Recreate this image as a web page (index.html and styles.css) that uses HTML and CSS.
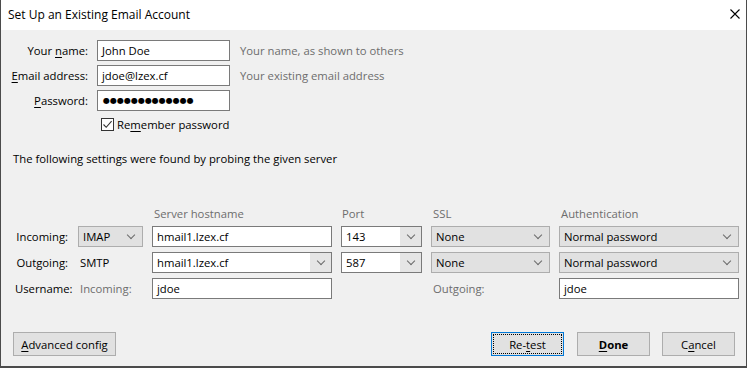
FILE: index.html
```html
<!DOCTYPE html>
<html>
<head>
<meta charset="utf-8">
<link rel="stylesheet" href="styles.css">
</head>
<body>
<div class="window">
  <div class="titlebar">
    <span class="title">Set Up an Existing Email Account</span>
    <svg class="close" width="10" height="10" viewBox="0 0 10 10"><path d="M0.5 0.5 L9.5 9.5 M9.5 0.5 L0.5 9.5" stroke="#000" stroke-width="1.1" fill="none"/></svg>
  </div>

  <div class="identity">
    <label class="lbl">Your <u>n</u>ame:</label>
    <div class="field">John Doe</div>
    <span class="hint">Your name, as shown to others</span>

    <label class="lbl"><u>E</u>mail address:</label>
    <div class="field">jdoe@lzex.cf</div>
    <span class="hint">Your existing email address</span>

    <label class="lbl"><u>P</u>assword:</label>
    <div class="field dots">●●●●●●●●●●●●●</div>
    <span></span>
  </div>

  <div class="remember">
    <span class="check"><svg width="11" height="11" viewBox="0 0 11 11"><path d="M1.5 5.5 L4.2 8.3 L9.6 2.2" stroke="#333" stroke-width="1.1" fill="none"/></svg></span>
    <span>Re<u>m</u>ember password</span>
  </div>

  <p class="probe">The following settings were found by probing the given server</p>

  <div class="servers">
    <span></span>
    <span></span>
    <span class="head">Server hostname</span>
    <span class="head">Port</span>
    <span class="head">SSL</span>
    <span class="head">Authentication</span>

    <span class="rowlbl">Incoming:</span>
    <div class="select">IMAP<i class="chev"></i></div>
    <div class="field">hmail1.lzex.cf</div>
    <div class="combo"><span class="ctext">143</span><span class="cbtn"><i class="chev"></i></span></div>
    <div class="select">None<i class="chev"></i></div>
    <div class="select">Normal password<i class="chev"></i></div>

    <span class="rowlbl">Outgoing:</span>
    <span class="plain">SMTP</span>
    <div class="combo"><span class="ctext">hmail1.lzex.cf</span><span class="cbtn"><i class="chev"></i></span></div>
    <div class="combo"><span class="ctext">587</span><span class="cbtn"><i class="chev"></i></span></div>
    <div class="select">None<i class="chev"></i></div>
    <div class="select">Normal password<i class="chev"></i></div>

    <span class="rowlbl">Username:</span>
    <span class="plain muted">Incoming:</span>
    <div class="field">jdoe</div>
    <span></span>
    <span class="plain muted">Outgoing:</span>
    <div class="field">jdoe</div>
  </div>

  <div class="buttons">
    <button class="btn wide"><u>A</u>dvanced config</button>
    <span class="spacer"></span>
    <button class="btn focus"><span class="focusring">Re-<u>t</u>est</span></button>
    <button class="btn default"><u>D</u>one</button>
    <button class="btn">C<u>a</u>ncel</button>
  </div>
</div>
</body>
</html>
```

FILE: styles.css
```css
* { box-sizing: border-box; }
html, body { margin: 0; padding: 0; }
body {
  font-family: "Open Sans", "Noto Sans", sans-serif;
  font-size: 11.3px;
  color: #000;
  background: #f0f0f0;
}
u { text-decoration: underline; text-underline-offset: 2px; }

.window {
  width: 747px;
  height: 368px;
  background: #f0f0f0;
  border-left: 1px solid #4b4b4b;
  border-right: 1px solid #4b4b4b;
  border-bottom: 2px solid #4b4b4b;
  display: flex;
  flex-direction: column;
}

.titlebar {
  height: 30px;
  background: #fff;
  display: flex;
  align-items: center;
  justify-content: space-between;
  padding: 0 6px 1px 7px;
  margin: 0 -1px;
  border-left: 1px solid #4b4b4b;
  border-right: 1px solid #4b4b4b;
  flex: none;
}
.title { font-size: 12px; }
.close { display: block; margin-top: -2px; }

.identity {
  margin-top: 10px;
  display: grid;
  grid-template-columns: 87px 133px auto;
  column-gap: 9px;
  row-gap: 4px;
  align-items: center;
}
.identity .hint { margin-left: 1px; color: #6d6d6d; }
.lbl { text-align: right; }

.field {
  height: 21px;
  background: #fff;
  border: 1px solid #7a7a7a;
  padding: 0 4px;
  display: flex;
  align-items: center;
  white-space: nowrap;
  overflow: hidden;
}
.dots { font-family: "DejaVu Sans", sans-serif; font-size: 8px; letter-spacing: 0; padding-left: 5px; }

.remember {
  margin: 7px 0 0 100px;
  display: flex;
  align-items: center;
  height: 13px;
  gap: 3px;
}
.check {
  width: 13px;
  height: 13px;
  border: 1px solid #333;
  background: #fff;
  display: flex;
  align-items: center;
  justify-content: center;
}
.check svg { display: block; }

.probe {
  margin: 20px 0 0 12px;
  line-height: 16px;
}

.servers {
  margin: 38px 0 0 14px;
  display: grid;
  grid-template-columns: 54px 65px 180px 81px 119px 180px;
  grid-template-rows: 16px 21px 21px 21px;
  column-gap: 9px;
  row-gap: 5px;
  align-items: center;
}
.servers > :nth-child(4) { margin-left: -1px; }
.head { color: #6d6d6d; padding-left: 2px; }
.rowlbl { text-align: right; white-space: nowrap; margin-right: 1px; }
.plain { padding-left: 2px; }
.muted { color: #6d6d6d; }

.select {
  height: 21px;
  background: #e1e1e1;
  border: 1px solid #adadad;
  padding: 0 4px;
  display: flex;
  align-items: center;
  justify-content: space-between;
  white-space: nowrap;
}
.chev {
  width: 6px;
  height: 6px;
  border-right: 1px solid #6a6a6a;
  border-bottom: 1px solid #6a6a6a;
  transform: rotate(45deg);
  margin: -3px 4px 0 0;
  flex: none;
}
.combo {
  height: 21px;
  display: flex;
  border: 1px solid #7a7a7a;
  background: #fff;
}
.ctext {
  flex: 1;
  padding: 0 4px;
  display: flex;
  align-items: center;
  white-space: nowrap;
}
.cbtn {
  width: 21px;
  background: #e5e5e5;
  display: flex;
  align-items: center;
  justify-content: center;
}
.cbtn .chev { margin: -3px 0 0 0; }

.buttons {
  margin: 33px 11px 0 12px;
  display: flex;
  gap: 12px;
}
.spacer { flex: 1; }
.btn {
  font: inherit;
  color: #000;
  width: 73px;
  height: 24px;
  background: #e1e1e1;
  border: 1px solid #adadad;
  padding: 0;
  display: flex;
  align-items: center;
  justify-content: center;
}
.btn.wide { width: 103px; }
.btn.default { font-weight: bold; }
.btn.focus {
  border: 1px solid #0078d7;
  padding: 1px;
  margin-right: 1px;
}
.focusring {
  width: 100%;
  height: 100%;
  border: 1px dotted #000;
  display: flex;
  align-items: center;
  justify-content: center;
}
```
